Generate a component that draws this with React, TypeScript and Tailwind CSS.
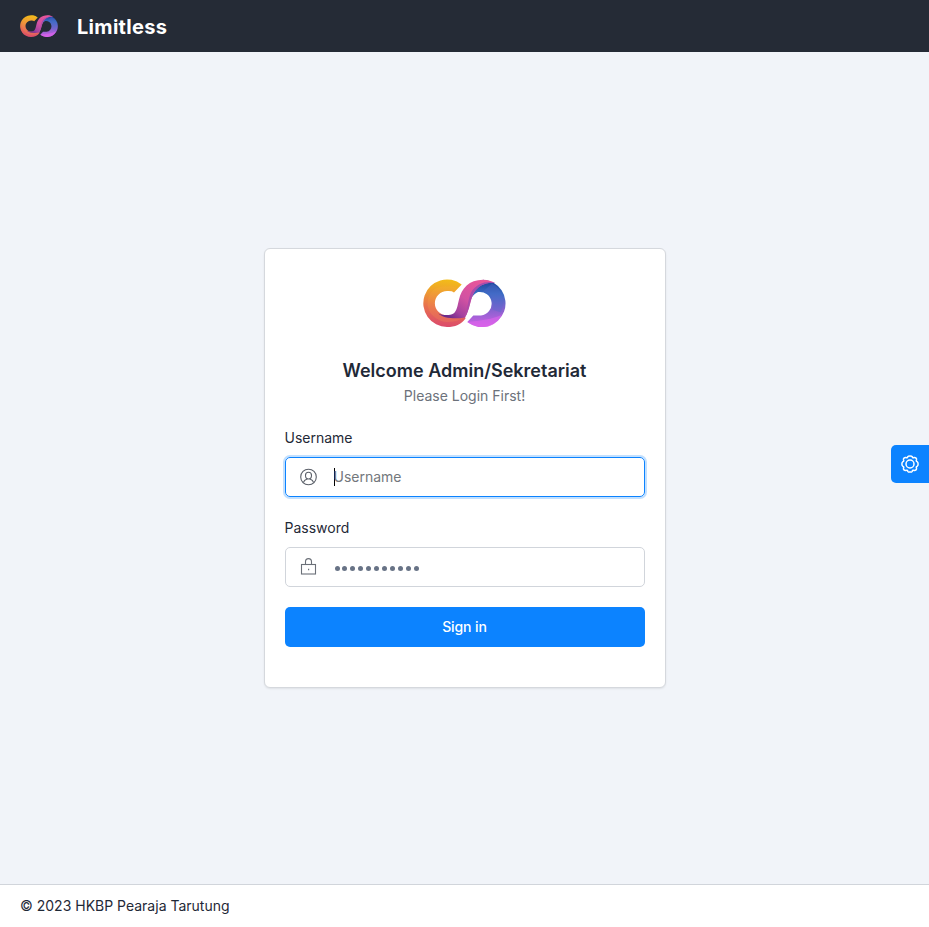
import React from 'react';

function Logo({ id, className }: { id: string; className: string }) {
  const ref = (name: string) => `url(#${id}-${name})`;
  return (
    <svg viewBox="0 -0.4 84 48" className={className} aria-hidden="true">
      <defs>
        <linearGradient id={`${id}-warm`} x1="28" y1="0" x2="24" y2="48" gradientUnits="userSpaceOnUse">
          <stop offset="0" stopColor="#f3bd18" />
          <stop offset=".22" stopColor="#efa629" />
          <stop offset=".6" stopColor="#e8704f" />
          <stop offset="1" stopColor="#db4a6c" />
        </linearGradient>
        <linearGradient id={`${id}-cool`} x1="64" y1="0" x2="64" y2="48" gradientUnits="userSpaceOnUse">
          <stop offset="0" stopColor="#1b3f94" />
          <stop offset=".3" stopColor="#3a6cc4" />
          <stop offset=".65" stopColor="#8a62d0" />
          <stop offset="1" stopColor="#d45fe6" />
        </linearGradient>
        <linearGradient id={`${id}-band`} x1="58" y1="0" x2="28" y2="40" gradientUnits="userSpaceOnUse">
          <stop offset="0" stopColor="#ea5699" />
          <stop offset=".5" stopColor="#d252a2" />
          <stop offset=".8" stopColor="#a5429f" />
          <stop offset="1" stopColor="#6c2a8a" />
        </linearGradient>
        <linearGradient id={`${id}-edge`} x1="70" y1="3" x2="43" y2="36" gradientUnits="userSpaceOnUse">
          <stop offset="0" stopColor="#9f4daf" />
          <stop offset="1" stopColor="#b34aa5" />
        </linearGradient>
      </defs>
      <path
        d="M38.7 5 A23.8 23.8 0 1 0 24 47.6 C32 47.6 38.5 44.8 42.500 39 L41 34 C35 37 29 36.3 24 36 A12 12 0 0 1 24 11.7 Q29 11.3 31 13 Z"
        fill={ref('warm')}
      />
      <path
        d="M5 20 C8 8 18 5 34 8 L31 13 Q29 11.3 24 11.7 A12 12 0 0 0 24 36 C31 38 37 37 42 37 C34 43 24 44 17 41 C8 37 3 29 5 20"
        fill="#ffb448"
        opacity=".16"
      />
      <path
        d="M60 .3 A23.7 23.7 0 1 1 44.3 42.7 L50.3 36 Q53 36.2 58 36.1 A11.8 11.8 0 1 0 55 12.7 C50 15 48 19 47 23 L49 10 Z"
        fill={ref('cool')}
      />
      <path
        d="M44.3 42.7 C57 41 70 40 79 35 C75 43 68 47.7 60 47.7 C54 47.7 49 46 44.3 42.7"
        fill="#df64ec"
        opacity=".6"
      />
      <path d="M69 4 C80 10 82 22 78 33 L69 30 C73 22 69 14 60 12 Z" fill="#5369cb" opacity=".35" />
      <path
        d="M15 34 C21 36.5 27 36 30.5 34 C34 31.5 34.5 26 36 20 C38.5 9 46 .3 60 .3 C65 .3 69 1.7 72 3.5 C62 2.4 54.8 7 51 13 C47.5 19 47 30 42 38 C31 40 20 38.500 15 34"
        fill={ref('band')}
      />
      <path
        d="M70 2.7 C60 2 53 5 48 13 C45 20 44.500 30 41.300 36.5 L42.500 37 C46.500 30 47 19 51 13 C54.8 7 62 2.4 72 3.5 Z"
        fill={ref('edge')}
      />
    </svg>
  );
}

function UserIcon() {
  return (
    <svg viewBox="0.5 0 18 18" className="h-[18px] w-[18px] shrink-0" fill="none" stroke="#5b6069" strokeWidth="1.1">
      <circle cx="9" cy="9" r="7.8" />
      <path d="M9 4.200c1.800 0 3 1.200 3 3 0 2.200-1.400 3.800-3 3.800s-3-1.600-3-3.800c0-1.800 1.200-3 3-3Z" />
      <path d="M3.900 14.500c.5-1.700 1.700-2.700 3.700-3.500v-.5M14.100 14.500c-.5-1.700-1.700-2.700-3.700-3.500v-.5" />
    </svg>
  );
}

function LockIcon() {
  return (
    <svg viewBox="0 0.500 18 18" className="h-[18px] w-[18px] shrink-0" fill="none" stroke="#6b7078" strokeWidth="1.1">
      <rect x="1.500" y="7" width="14" height="9.500" />
      <path d="M5.500 7V4.200c0-1.900 1.200-3.100 3-3.100s3 1.200 3 3.100V7" />
      <path d="M8 12h1.200" strokeWidth="1.400" />
    </svg>
  );
}

function GearIcon() {
  return (
    <svg viewBox="0 0 20 20" className="h-5 w-5" fill="none" stroke="#fff" strokeWidth="1.500" strokeLinejoin="round">
      <path d="M7.800 2.700 Q8.200 1.900 10 1.900 Q11.800 1.900 12.200 2.700 Q12.700 4.300 14.200 3.500 Q15.100 3.300 16 4.100 Q16.800 5 16.500 5.800 Q15.700 7.300 17.300 7.800 Q18.100 8.200 18.100 10 Q18.100 11.800 17.300 12.200 Q15.700 12.700 16.500 14.200 Q16.800 15 16 15.900 Q15.100 16.700 14.200 16.500 Q12.700 15.700 12.200 17.300 Q11.800 18.100 10 18.100 Q8.200 18.100 7.800 17.300 Q7.300 15.700 5.800 16.500 Q4.900 16.700 4 15.900 Q3.200 15 3.500 14.200 Q4.300 12.700 2.700 12.200 Q1.900 11.800 1.900 10 Q1.900 8.200 2.700 7.800 Q4.300 7.300 3.500 5.800 Q3.200 5 4 4.100 Q4.900 3.300 5.800 3.500 Q7.300 4.300 7.800 2.700 Z" />
      <circle cx="10" cy="10" r="4" />
    </svg>
  );
}

export default function App() {
  return (
    <div className="flex h-[927px] flex-col bg-[#f1f4f9] font-['Inter',sans-serif] text-[14px] leading-5 text-[#1f2937]">
      <header className="flex h-[52px] shrink-0 items-center bg-[#252b36] px-5">
        <Logo id="brand" className="h-[22px] w-[38.500px]" />
        <span className="ml-[18.500px] mt-[2px] text-[20px] font-bold leading-7 tracking-[0.3px] text-white">Limitless</span>
      </header>

      <main className="flex flex-1 items-center justify-center">
        <form className="flex h-[440px] w-[402px] flex-col rounded-md border border-[#d5d8dd] bg-white px-5 pt-[30px] shadow-[0_1px_2px_rgba(0,0,0,0.08)]">
          <Logo id="hero" className="h-12 w-[84px] self-center" />
          <h1 className="mt-[33px] text-center text-[18px] font-semibold leading-[22px]">Welcome Admin/Sekretariat</h1>
          <p className="mt-1 text-center text-[#6c727b]">Please Login First!</p>

          <label className="mt-[22px]">Username</label>
          <div className="mt-[9px] flex h-10 shrink-0 items-center rounded-[5px] border border-[#0c83ff] px-[14px] shadow-[0_0_0_2px_#c2e0ff]">
            <UserIcon />
            <span className="ml-4 h-[18px] w-px bg-black" />
            <span className="-ml-px text-[#73777c]">Username</span>
          </div>

          <label className="mt-[21px]">Password</label>
          <div className="mt-[9px] flex h-10 shrink-0 items-center rounded-[5px] border border-[#d1d5db] px-[14px]">
            <LockIcon />
            <span className="ml-[17px] mt-[2px] flex gap-[2.95px]">
              {Array.from({ length: 11 }, (_, i) => (
                <span key={i} className="h-[5px] w-[5px] rounded-full bg-[#687386]" />
              ))}
            </span>
          </div>

          <button type="button" className="mt-5 h-10 shrink-0 rounded-[5px] bg-[#0c83ff] font-medium tracking-[-0.1px] text-white">
            Sign in
          </button>
        </form>
      </main>

      <footer className="flex h-[43px] shrink-0 items-center border-t border-[#d1d5db] bg-white px-5">
        © 2023 HKBP Pearaja Tarutung
      </footer>

      <button type="button" className="fixed right-0 top-[445px] flex h-[38px] w-[38px] items-center justify-center rounded-l-[5px] bg-[#0c83ff]">
        <GearIcon />
      </button>
    </div>
  );
}
